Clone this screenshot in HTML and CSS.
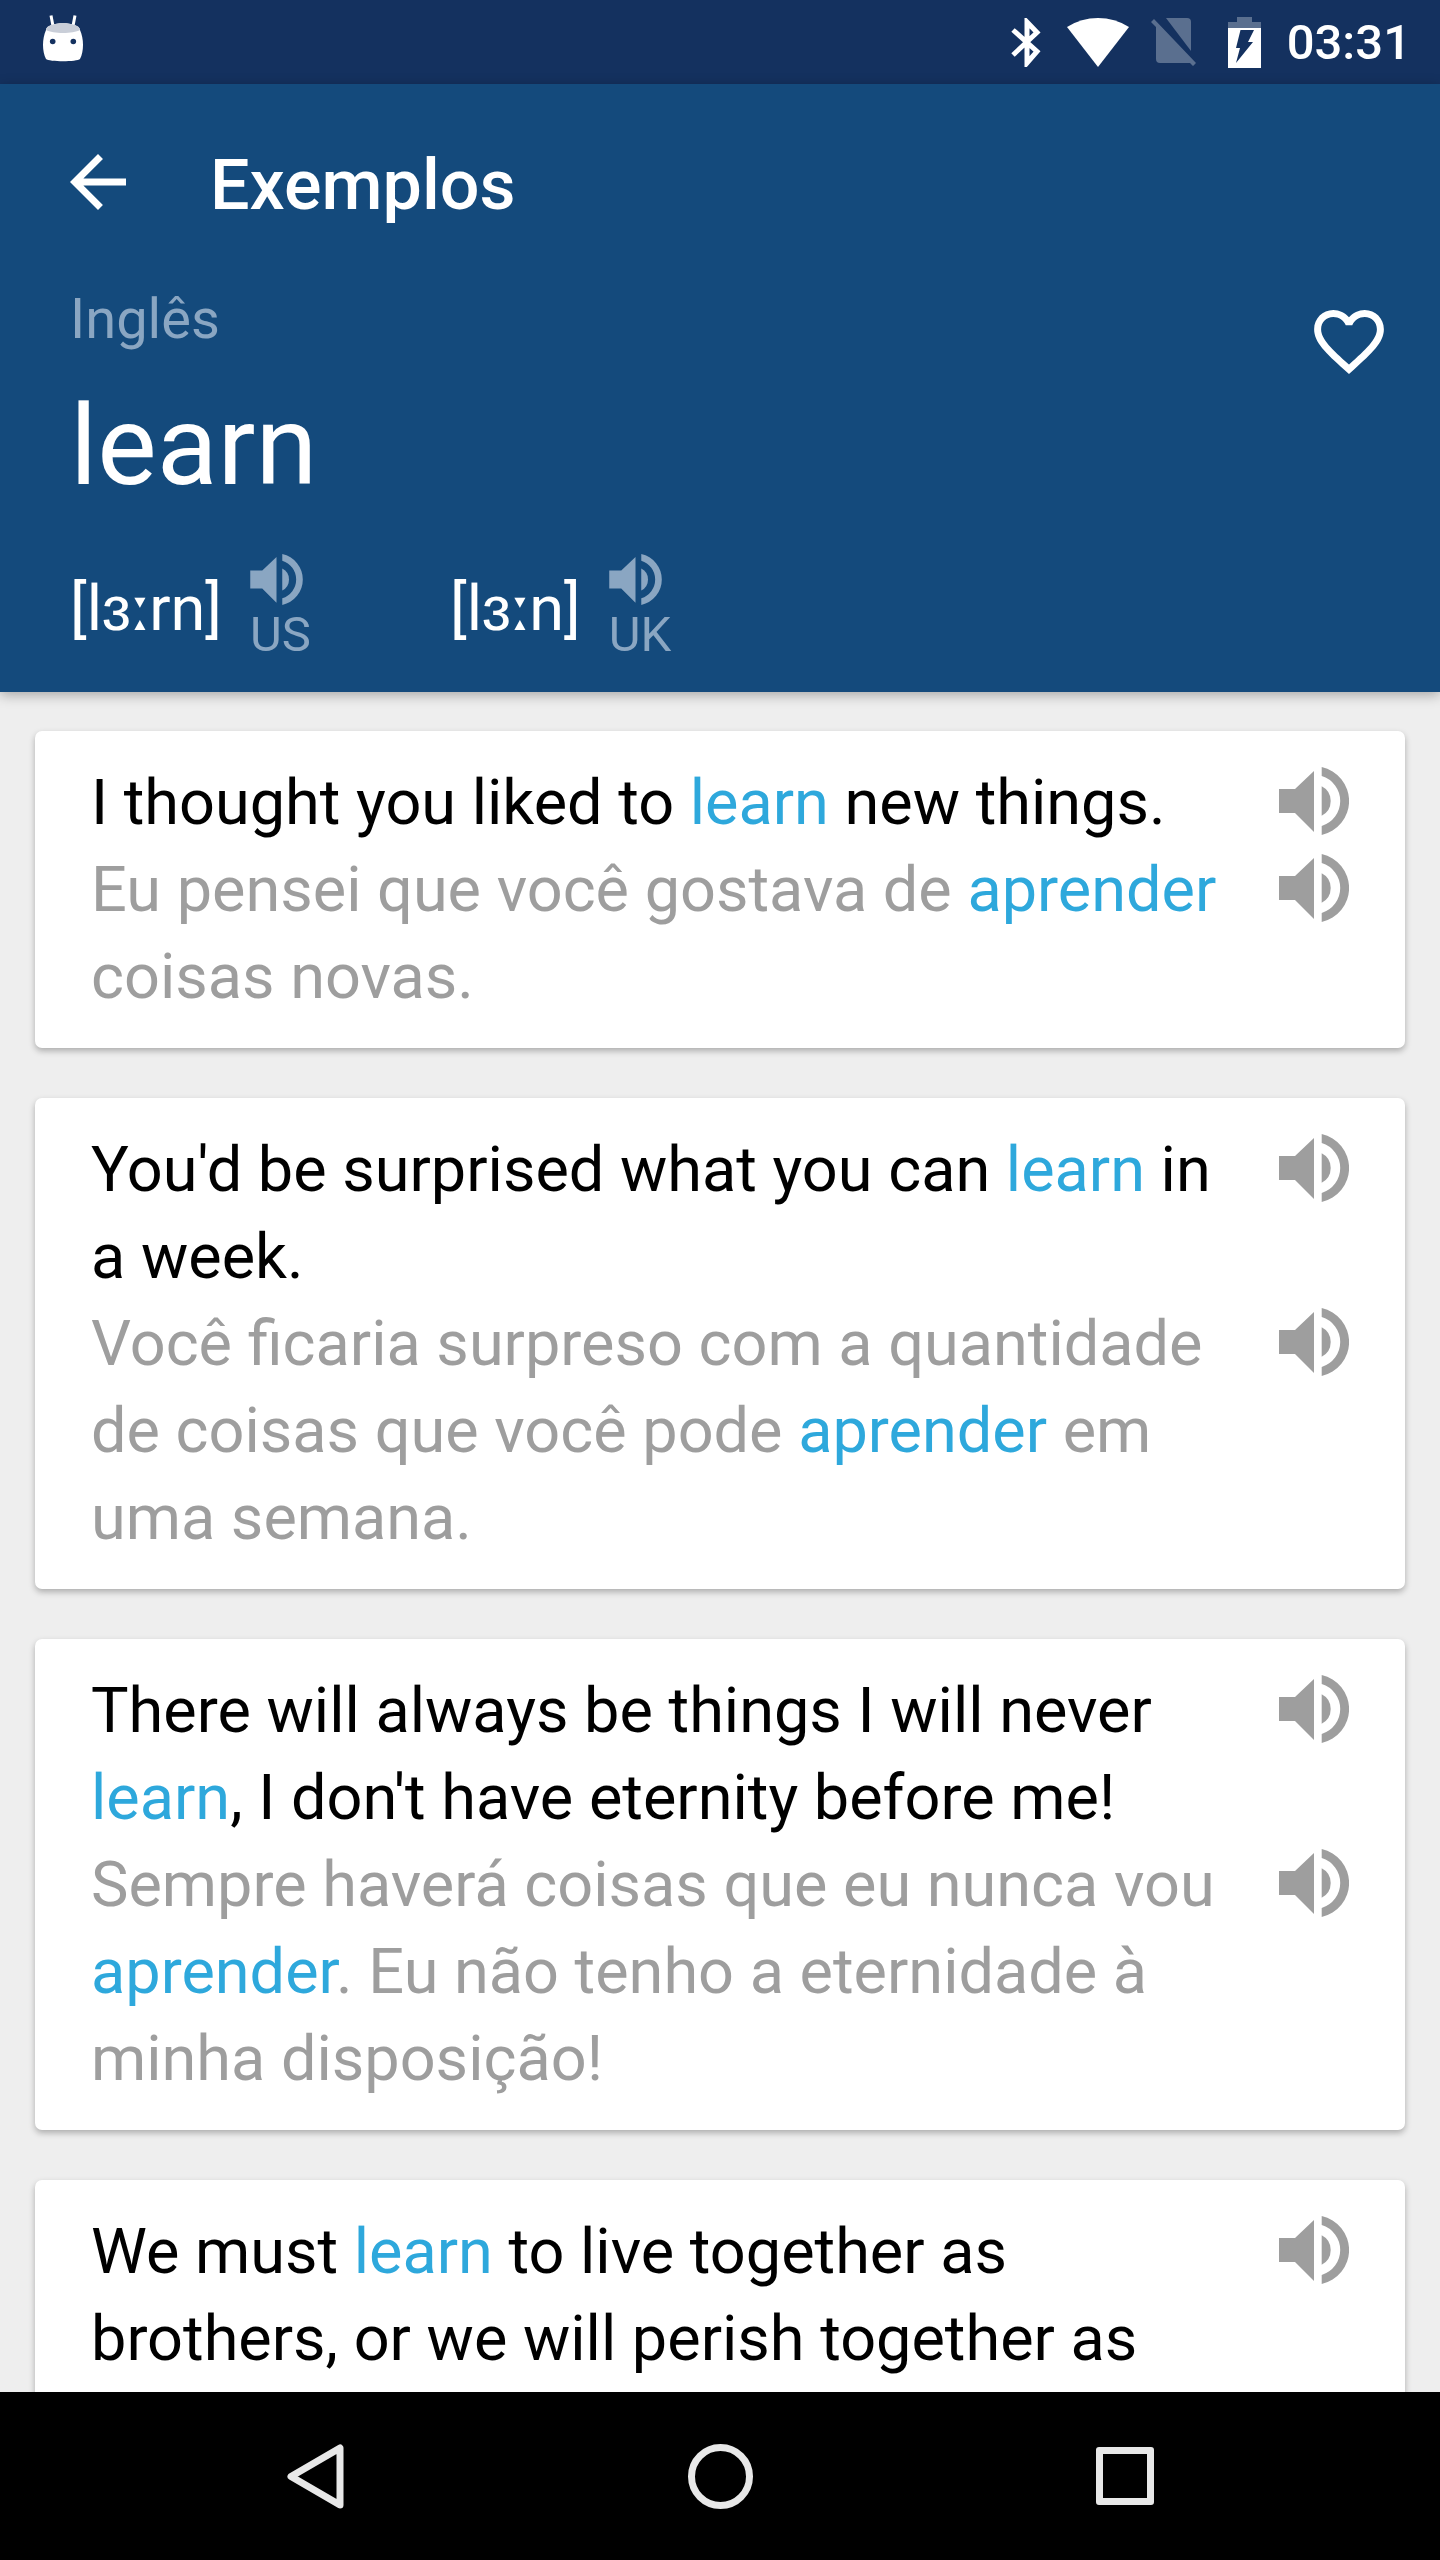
FILE: index.html
```html
<!DOCTYPE html>
<html lang="pt">
<head>
    <meta charset="UTF-8">
    <meta name="viewport" content="width=device-width, initial-scale=1.0">
    <title>Exemplos</title>
    <link rel="stylesheet" href="styles.css">
</head>
<body>
    <svg class="defs">
        <symbol id="speaker" viewBox="0 0 70 68">
            <path d="M0 22H16L35 4V65L16 46H0Z"/>
            <path d="M42.7 19.3A16.5 16.5 0 0 1 42.7 48.7Z"/>
            <path d="M42.7 0A34.8 34.8 0 0 1 42.7 68V58.9A26 26 0 0 0 42.7 9.1Z"/>
        </symbol>
    </svg>
    <div class="screen">
        <div class="status-bar">
            <svg class="bot-icon" viewBox="0 0 40 47">
                <path class="antenna" d="M8 0.5L10 11M32 0.5L30 11"/>
                <path fill="#fff" d="M3 15C3 6 37 6 37 15C41 24 41 36 37 44C34 47 6 47 3 44C-1 36 -1 24 3 15Z"/>
                <path fill="#c9ced8" d="M3 15C3 6 37 6 37 15C30 19 10 19 3 15Z"/>
                <circle fill="#14315f" cx="9.700" cy="26.500" r="2.800"/>
                <circle fill="#14315f" cx="30.300" cy="26.500" r="2.800"/>
            </svg>
            <div class="status-right">
                <svg class="bt-icon" viewBox="0 0 30 49">
                    <path d="M2 12L26 33.500L16 45V4L26 14.500L2 37" fill="none" stroke="#fff" stroke-width="5"/>
                </svg>
                <svg class="wifi-icon" viewBox="0 0 62 49">
                    <path fill="#fff" d="M0 9A58 58 0 0 1 62 9L31 49Z"/>
                </svg>
                <svg class="sim-icon" viewBox="0 0 45 48">
                    <path fill="#fff" fill-opacity=".3" d="M15 0H36Q40 0 40 4V33Z"/>
                    <path fill="#fff" fill-opacity=".3" d="M0 4L3 1L45 45L42 48L39 45H9Q5 45 5 41V9Z"/>
                </svg>
                <svg class="battery-icon" viewBox="0 0 33 51">
                    <path fill="#fff" fill-opacity=".3" d="M9 0H24V5H33V11H0V5H9Z"/>
                    <path fill="#fff" d="M0 11H33V51H0Z"/>
                    <path fill="#14315f" d="M12.500 13H26L20 25H25L8 46L12 31H8Z"/>
                </svg>
                <span class="clock">03:31</span>
            </div>
        </div>
        <header class="header">
            <div class="toolbar">
                <svg class="back-icon" viewBox="4 4 16 16">
                    <path fill="#fff" d="M20 11H7.830l5.590-5.590L12 4l-8 8 8 8 1.410-1.410L7.830 13H20v-2z"/>
                </svg>
                <h1 class="title">Exemplos</h1>
            </div>
            <div class="word-row">
                <div>
                    <div class="lang">Inglês</div>
                    <div class="word">learn</div>
                    <div class="prons">
                        <div class="pron">
                            <span class="ipa">[lɜ<span class="ipa-mark">ː</span>rn]</span>
                            <div class="accent">
                                <svg class="accent-icon"><use href="#speaker"/></svg>
                                <span class="accent-name">US</span>
                            </div>
                        </div>
                        <div class="pron">
                            <span class="ipa">[lɜ<span class="ipa-mark">ː</span>n]</span>
                            <div class="accent">
                                <svg class="accent-icon"><use href="#speaker"/></svg>
                                <span class="accent-name">UK</span>
                            </div>
                        </div>
                    </div>
                </div>
                <svg class="heart-icon" viewBox="2 3 20 18.350">
                    <path fill="#fff" d="M16.500 3c-1.740 0-3.410.810-4.500 2.090C10.910 3.810 9.240 3 7.500 3 4.420 3 2 5.420 2 8.500c0 3.780 3.400 6.860 8.550 11.540L12 21.350l1.450-1.320C18.600 15.360 22 12.280 22 8.500 22 5.420 19.580 3 16.500 3zm-4.400 15.550l-.1.100-.1-.100C7.140 14.240 4 11.390 4 8.500 4 6.500 5.500 5 7.500 5c1.540 0 3.040.990 3.570 2.360h1.870C13.460 5.990 14.960 5 16.500 5c2 0 3.500 1.500 3.500 3.500 0 2.890-3.140 5.740-7.900 10.050z"/>
                </svg>
            </div>
        </header>
        <main class="list">
            <div class="card">
                <div class="line">
                    <p class="en">I thought you liked to <em>learn</em> new things.</p>
                    <svg class="speak"><use href="#speaker"/></svg>
                </div>
                <div class="line">
                    <p class="pt">Eu pensei que você gostava de <em>aprender</em> coisas novas.</p>
                    <svg class="speak"><use href="#speaker"/></svg>
                </div>
            </div>
            <div class="card">
                <div class="line">
                    <p class="en">You'd be surprised what you can <em>learn</em> in a week.</p>
                    <svg class="speak"><use href="#speaker"/></svg>
                </div>
                <div class="line">
                    <p class="pt">Você ficaria surpreso com a quantidade de coisas que você pode <em>aprender</em> em uma semana.</p>
                    <svg class="speak"><use href="#speaker"/></svg>
                </div>
            </div>
            <div class="card">
                <div class="line">
                    <p class="en">There will always be things I will never <em>learn</em>, I don't have eternity before me!</p>
                    <svg class="speak"><use href="#speaker"/></svg>
                </div>
                <div class="line">
                    <p class="pt">Sempre haverá coisas que eu nunca vou <em>aprender</em>. Eu não tenho a eternidade à minha disposição!</p>
                    <svg class="speak"><use href="#speaker"/></svg>
                </div>
            </div>
            <div class="card">
                <div class="line">
                    <p class="en">We must <em>learn</em> to live together as brothers, or we will perish together as</p>
                    <svg class="speak"><use href="#speaker"/></svg>
                </div>
            </div>
        </main>
        <nav class="nav-bar">
            <div class="nav-btn">
                <svg class="nav-back" viewBox="0 0 57 65">
                    <path d="M53 4V61L4 32.500Z" fill="none" stroke="#e8e8e8" stroke-width="7" stroke-linejoin="round"/>
                </svg>
            </div>
            <div class="nav-btn"><div class="nav-home"></div></div>
            <div class="nav-btn"><div class="nav-recent"></div></div>
        </nav>
    </div>
</body>
</html>
```

FILE: styles.css
```css
* {
    box-sizing: border-box;
}
body {
    margin: 0;
    font-family: Roboto, sans-serif;
    background-color: #eeeeee;
}
.defs {
    display: none;
}
.screen {
    display: flex;
    flex-direction: column;
    width: 1440px;
    height: 2560px;
    overflow: hidden;
}
.status-bar {
    display: flex;
    flex: none;
    justify-content: space-between;
    align-items: center;
    height: 84px;
    padding: 0 29px 0 43px;
    background-color: #14315f;
}
.bot-icon {
    width: 40px;
    height: 47px;
    margin-top: -8px;
}
.antenna {
    fill: none;
    stroke: #fff;
    stroke-width: 3;
}
.status-right {
    display: flex;
    align-items: center;
}
.bt-icon {
    width: 30px;
    height: 49px;
    margin-right: 26px;
}
.wifi-icon {
    width: 62px;
    height: 49px;
    margin-right: 22px;
}
.sim-icon {
    width: 45px;
    height: 48px;
    margin-right: 32px;
}
.battery-icon {
    width: 33px;
    height: 51px;
    margin-right: 26px;
}
.clock {
    color: #fff;
    font-size: 49px;
    font-weight: 500;
}
.header {
    position: relative;
    flex: none;
    height: 608px;
    background-color: #144a7c;
    box-shadow: 0 3px 12px rgba(0, 0, 0, 0.3);
}
.toolbar {
    display: flex;
    align-items: center;
    height: 196px;
    padding-left: 70px;
}
.back-icon {
    width: 56px;
    height: 56px;
    margin-right: 84px;
}
.title {
    margin: 6px 0 0;
    color: #fff;
    font-size: 70px;
    font-weight: 500;
}
.word-row {
    display: flex;
    justify-content: space-between;
    align-items: flex-start;
    padding: 0 56px 0 70px;
}
.lang {
    color: #8aa6c2;
    font-size: 56px;
    line-height: 78px;
}
.word {
    margin-top: 23px;
    color: #fff;
    font-size: 112px;
    line-height: 130px;
}
.prons {
    display: flex;
    margin-top: 32px;
}
.pron {
    display: flex;
    align-items: flex-start;
    width: 380px;
}
.ipa {
    margin-top: 29px;
    color: #fff;
    font-size: 63px;
    line-height: 74px;
}
.ipa-mark {
    font-family: "DejaVu Sans", sans-serif;
    letter-spacing: -3px;
}
.accent {
    margin: 11px 0 0 28px;
    color: #8aa6c2;
    font-size: 49px;
    line-height: 50px;
}
.accent-icon {
    display: block;
    width: 53px;
    height: 51px;
    fill: #8aa6c2;
}
.accent-name {
    display: block;
    margin-top: 5px;
}
.heart-icon {
    width: 70px;
    height: 64px;
    margin-top: 30px;
}
.list {
    flex: 1;
    min-height: 0;
    padding: 39px 35px 0;
    overflow: hidden;
}
.card {
    margin-bottom: 50px;
    padding: 28px 56px;
    background-color: #fff;
    border-radius: 7px;
    box-shadow: 0 3px 6px rgba(0, 0, 0, 0.28);
}
.line {
    display: flex;
    justify-content: space-between;
    align-items: flex-start;
}
.line p {
    width: 1153px;
    margin: 0;
    font-size: 63px;
    line-height: 87px;
}
.en {
    color: #000;
}
.pt {
    color: #9e9e9e;
}
em {
    color: #2ea8dc;
    font-style: normal;
}
.speak {
    flex: none;
    width: 70px;
    height: 68px;
    margin-top: 8px;
    fill: #9e9e9e;
}
.nav-bar {
    display: flex;
    flex: none;
    justify-content: center;
    height: 168px;
    background-color: #000;
}
.nav-btn {
    display: flex;
    justify-content: center;
    align-items: center;
    width: 405px;
}
.nav-back {
    width: 57px;
    height: 65px;
}
.nav-home {
    width: 65px;
    height: 65px;
    border: 7px solid #e8e8e8;
    border-radius: 50%;
}
.nav-recent {
    width: 58px;
    height: 58px;
    border: 7px solid #e8e8e8;
    border-radius: 3px;
}
```
